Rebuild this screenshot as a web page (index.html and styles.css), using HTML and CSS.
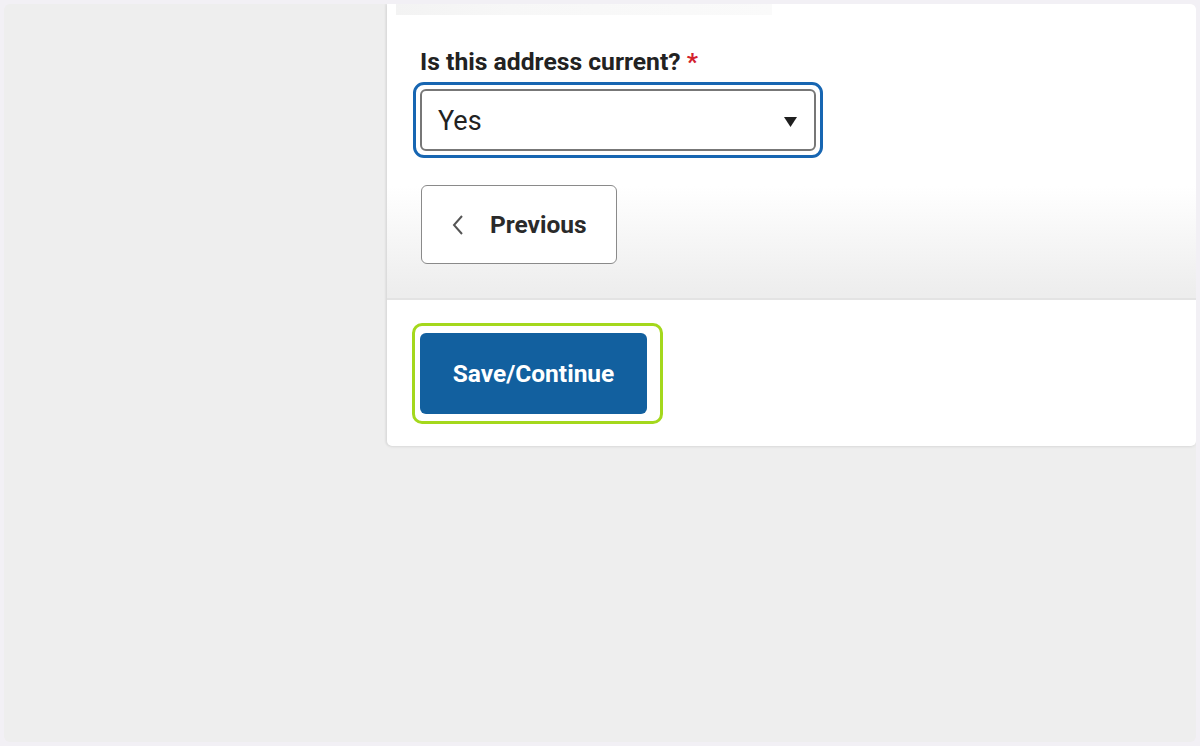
FILE: index.html
```html
<!DOCTYPE html>
<html lang="en">
<head>
<meta charset="utf-8">
<title>Address</title>
<link rel="stylesheet" href="styles.css">
</head>
<body>
<div class="frame">
  <div class="side"></div>
  <div class="card">
    <div class="card-top">
      <div class="strip"></div>
      <div class="field">
        <label class="label" for="current">Is this address current? <span class="req">*</span></label>
        <div class="focus-ring">
          <div class="select" id="current">
            <span class="value">Yes</span>
            <svg class="caret" width="13" height="10" viewBox="0 0 13 10"><path d="M0 0H13L6.5 10Z" fill="#1f1f1f"/></svg>
          </div>
        </div>
        <button class="btn-prev" type="button">
          <svg class="chev" width="12" height="22" viewBox="0 0 12 22"><path d="M10 2L2 11L10 20" fill="none" stroke="#555" stroke-width="2"/></svg>
          <span>Previous</span>
        </button>
      </div>
    </div>
    <div class="card-footer">
      <div class="green-ring">
        <button class="btn-save" type="button">Save/Continue</button>
      </div>
    </div>
  </div>
</div>
</body>
</html>
```

FILE: styles.css
```css
html, body {
  margin: 0;
  padding: 0;
  background: #f2f0f5;
  font-family: Roboto, "Liberation Sans", Arial, sans-serif;
}

.frame {
  margin: 4px;
  height: 738px;
  background: #eeeeee;
  border-radius: 6px;
  display: flex;
  overflow: hidden;
}

.side {
  width: 383px;
  flex: none;
}

.card {
  width: 809px;
  flex: none;
  align-self: flex-start;
  background: #fff;
  border-radius: 0 0 5px 5px;
  box-shadow: -2px 0 2px rgba(0, 0, 0, 0.05), 0 1px 3px rgba(0, 0, 0, 0.08);
}

.card-top {
  height: 294px;
  background: linear-gradient(to bottom, #ffffff 0, #ffffff 182px, #ededed 290px);
  border-bottom: 2px solid #e3e3e3;
}

.strip {
  margin-left: 9px;
  width: 376px;
  height: 11px;
  background: linear-gradient(to right, #f3f3f3 0, #f7f7f7 30%, #fafafa 100%);
}

.field {
  padding: 33px 0 0 33px;
  display: flex;
  flex-direction: column;
  align-items: flex-start;
}

.label {
  font-size: 24.7px;
  line-height: 28px;
  font-weight: 700;
  color: #222;
}

.req {
  color: #d3212c;
}

.focus-ring {
  margin: 6px 0 0 -7px;
  padding: 4px;
  border: 3px solid #1766b2;
  border-radius: 11px;
}

.select {
  border: 2px solid #777;
  border-radius: 6px;
  display: flex;
  align-items: center;
  justify-content: space-between;
  padding: 2px 17px 0 16px;
  box-sizing: content-box;
  width: 359px;
  height: 56px;
}

.value {
  font-size: 27px;
  color: #222;
}

.caret {
  margin-top: 1px;
}

.btn-prev {
  margin: 27px 0 0 1px;
  width: 196px;
  height: 79px;
  background: #fff;
  border: 1px solid #8a8a8a;
  border-radius: 6px;
  display: flex;
  align-items: center;
  padding: 0 0 0 30px;
  gap: 26px;
  font-family: inherit;
  font-size: 24.5px;
  font-weight: 700;
  color: #2a2a2a;
}

.card-footer {
  padding: 23px 0 22px 25px;
}

.green-ring {
  display: inline-flex;
  padding: 7px 13px 7px 5px;
  border: 3px solid #a4d81c;
  border-radius: 10px;
}

.btn-save {
  width: 227px;
  height: 81px;
  background: #12609f;
  border: none;
  border-radius: 6px;
  color: #fff;
  font-family: inherit;
  font-size: 24.5px;
  font-weight: 700;
}
```
